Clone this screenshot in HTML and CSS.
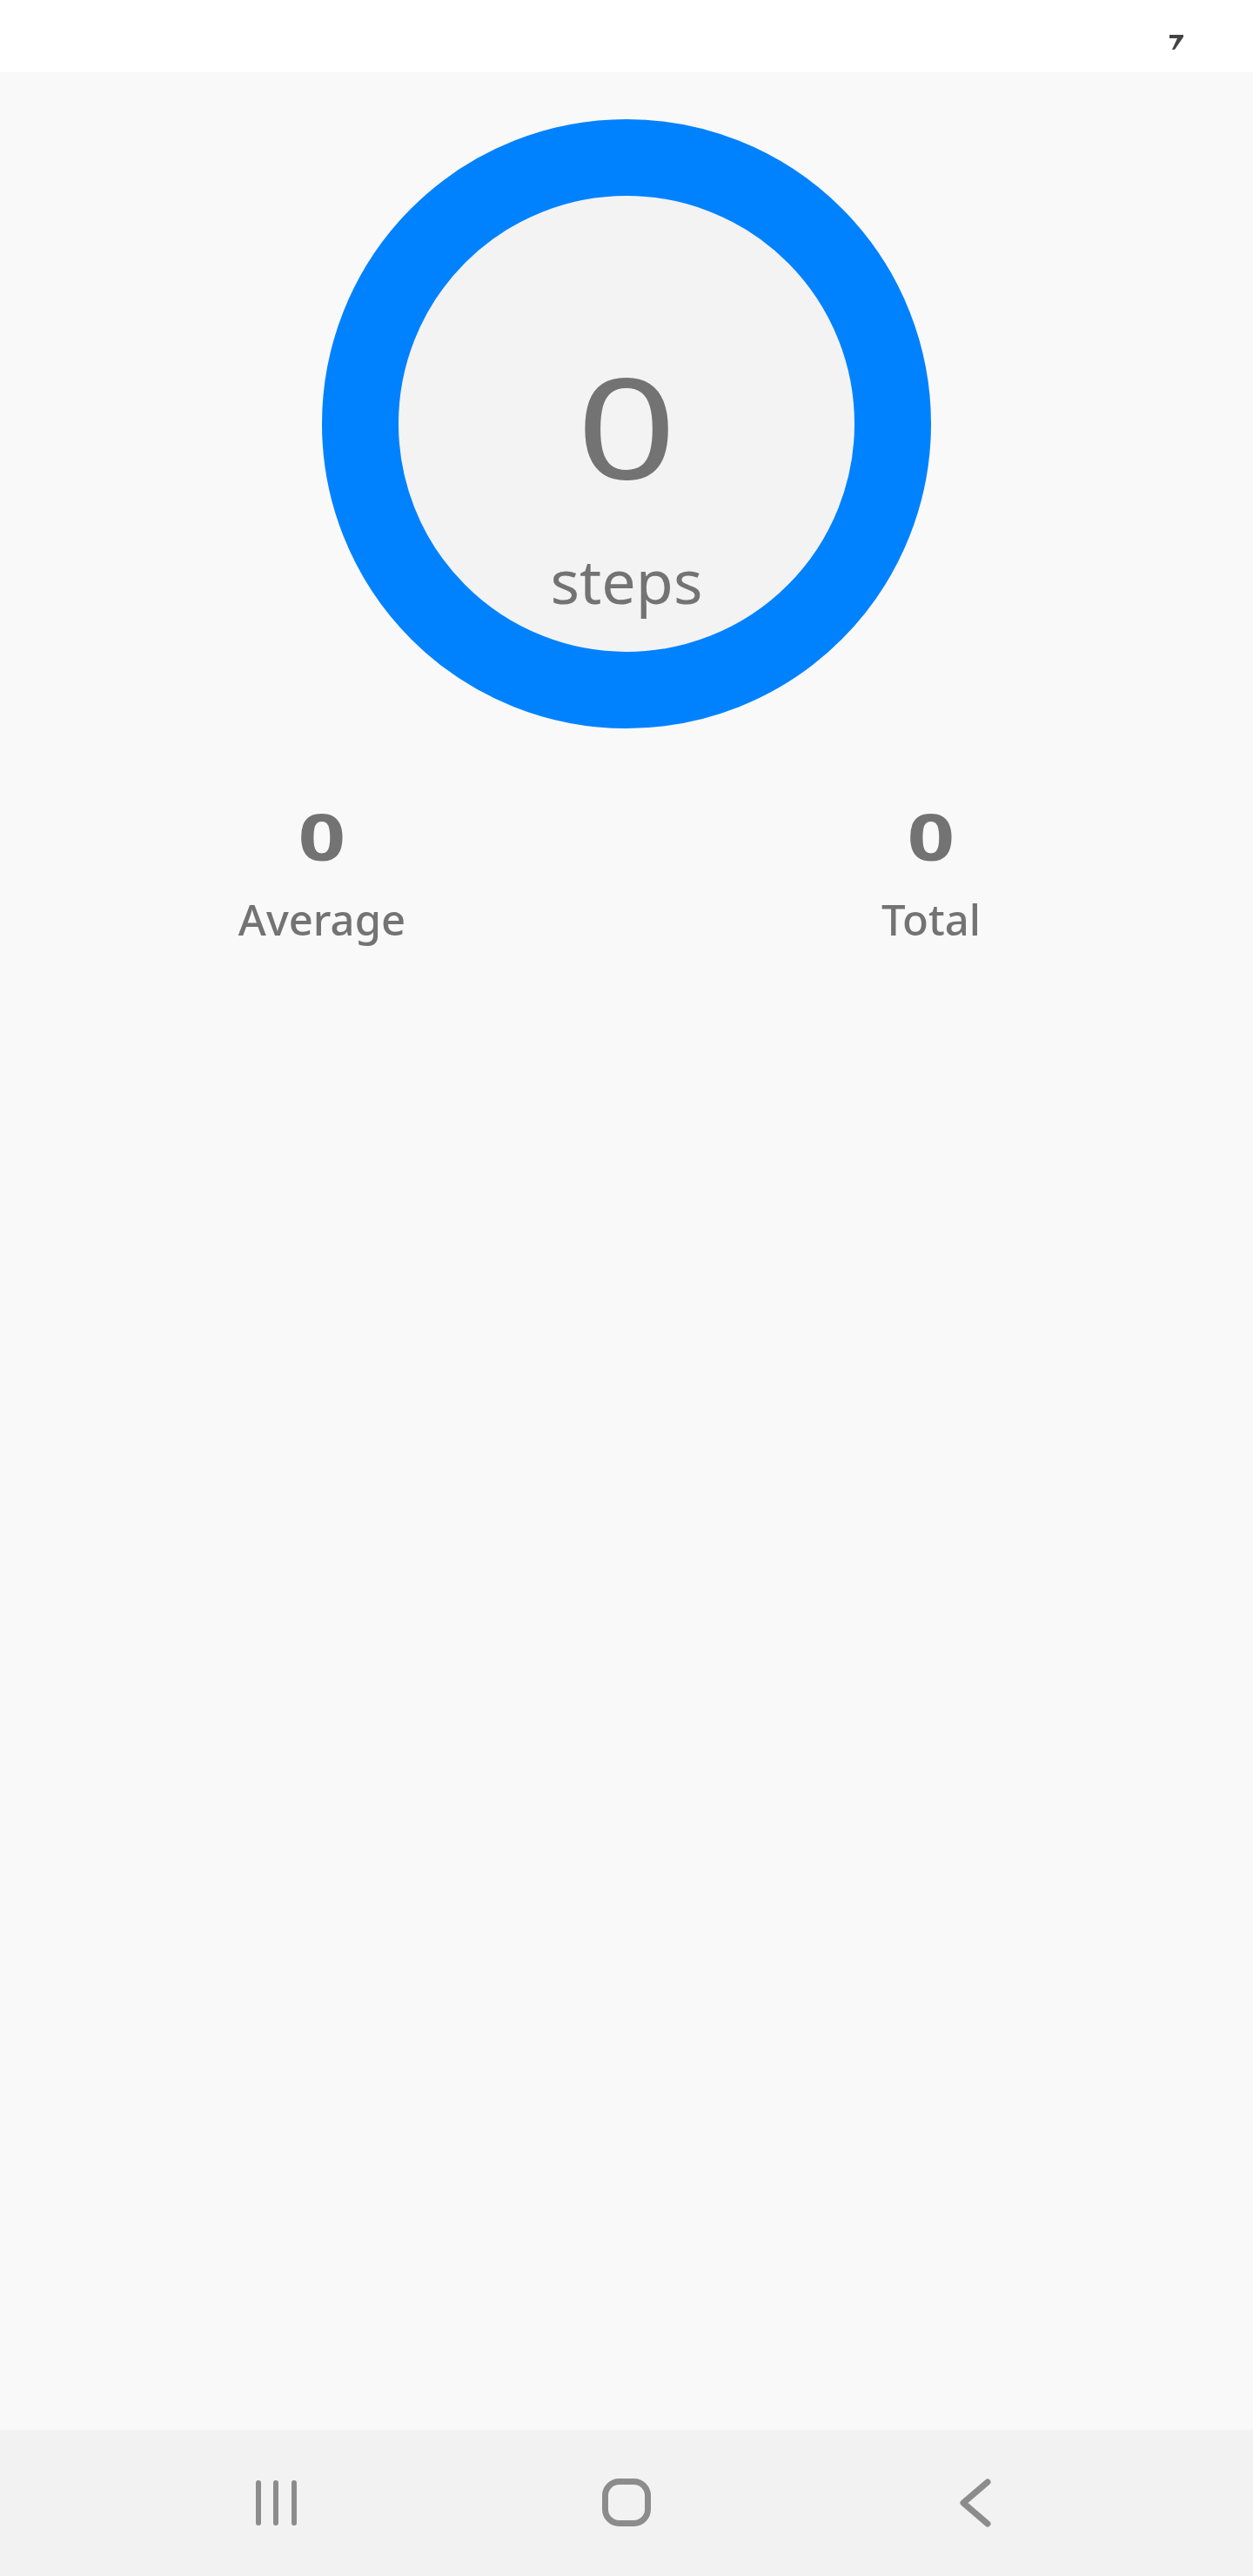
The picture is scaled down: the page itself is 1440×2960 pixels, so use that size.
FILE: index.html
```html
<!DOCTYPE html>
<html lang="en">
<head>
    <meta charset="UTF-8">
    <meta name="viewport" content="width=device-width, initial-scale=1.0">
    <title>Steps</title>
    <link rel="stylesheet" href="styles.css">
</head>
<body>
    <div class="screen">
        <!-- Barra de estado -->
        <div class="status-bar">
            <svg class="status-icon" width="20" height="20" viewBox="0 0 20 20">
                <polygon points="2,1 18,1 18,3.5 8,18 5,18 11,5 2,5" fill="#444"/>
            </svg>
        </div>

        <!-- Contenido principal -->
        <div class="main">
            <div class="ring">
                <div class="ring-value">0</div>
                <div class="ring-label">steps</div>
            </div>

            <div class="stats">
                <div class="stat">
                    <div class="stat-value">0</div>
                    <div class="stat-label">Average</div>
                </div>
                <div class="stat">
                    <div class="stat-value">0</div>
                    <div class="stat-label">Total</div>
                </div>
            </div>
        </div>

        <!-- Barra de navegación -->
        <div class="nav-bar">
            <svg class="nav-icon" width="120" height="120" viewBox="0 0 120 120">
                <g stroke="#8c8c8c" stroke-width="6" stroke-linecap="round">
                    <line x1="39" y1="37" x2="39" y2="83"/>
                    <line x1="59" y1="37" x2="59" y2="83"/>
                    <line x1="80" y1="37" x2="80" y2="83"/>
                </g>
            </svg>
            <svg class="nav-icon" width="120" height="120" viewBox="0 0 120 120">
                <rect x="35.5" y="35.5" width="49" height="48" rx="16" fill="none" stroke="#8c8c8c" stroke-width="7"/>
            </svg>
            <svg class="nav-icon" width="120" height="120" viewBox="0 0 120 120">
                <polyline points="73,36 45,60 73,84" fill="none" stroke="#8c8c8c" stroke-width="7" stroke-linecap="round" stroke-linejoin="round"/>
            </svg>
        </div>
    </div>
</body>
</html>
```

FILE: styles.css
```css
/* Estilos generales */
body {
    margin: 0;
    padding: 0;
    font-family: "Noto Sans", "Open Sans", sans-serif;
    background-color: #f9f9f9;
    color: #737373;
}

.screen {
    display: flex;
    flex-direction: column;
    min-height: 100vh;
}

/* Barra de estado */
.status-bar {
    height: 83px;
    background-color: #fff;
    display: flex;
    justify-content: flex-end;
    align-items: flex-start;
    padding-right: 78px;
}

.status-icon {
    margin-top: 39px;
}

/* Contenido principal */
.main {
    flex: 1;
    display: flex;
    flex-direction: column;
    align-items: center;
}

.ring {
    margin-top: 54px;
    width: 524px;
    height: 524px;
    border: 88px solid #0082ff;
    border-radius: 50%;
    background-color: #f3f3f3;
    display: flex;
    flex-direction: column;
    align-items: center;
}

/* el cero de la fuente original es más ancho */
.ring-value {
    margin-top: 182px;
    font-size: 161px;
    line-height: 1;
    transform: scaleX(1.25);
}

.ring-label {
    margin-top: 64px;
    font-size: 70px;
    line-height: 1;
}

.stats {
    margin-top: 87px;
    width: 100%;
    box-sizing: border-box;
    padding: 0 20px;
    display: grid;
    grid-template-columns: 1fr 1fr;
}

.stat {
    display: flex;
    flex-direction: column;
    align-items: center;
}

.stat-value {
    font-size: 73px;
    font-weight: bold;
    line-height: 1;
    transform: scaleX(1.3);
}

.stat-label {
    margin-top: 35px;
    font-size: 49px;
    font-weight: 500;
    line-height: 1;
}

/* Barra de navegación */
.nav-bar {
    height: 168px;
    background-color: #f2f2f2;
    display: flex;
    justify-content: center;
    align-items: center;
    gap: 282px;
}
```
